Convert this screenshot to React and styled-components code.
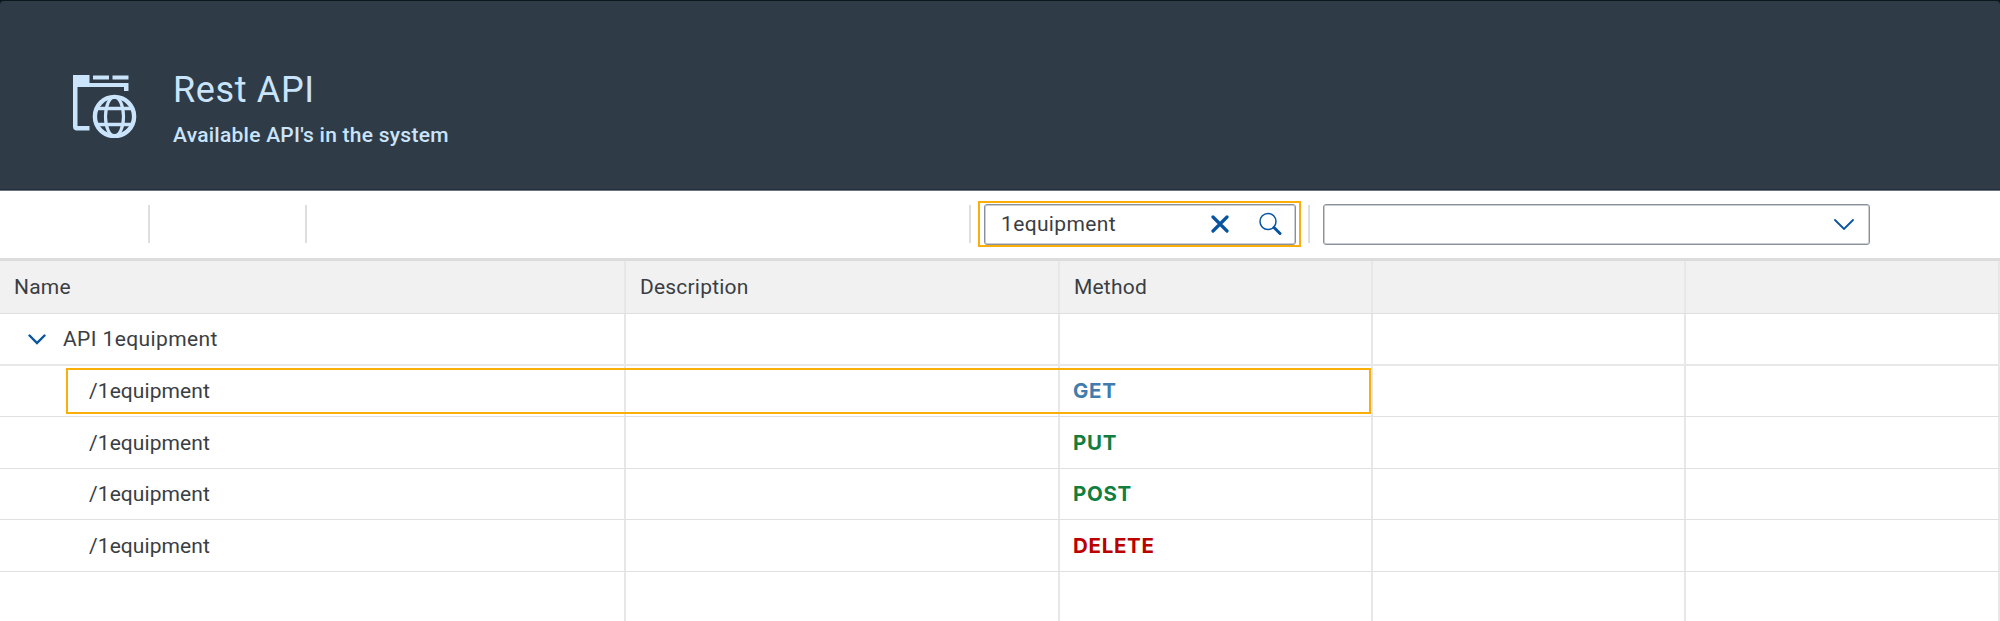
import React from "react";
import styled, { createGlobalStyle } from "styled-components";

const Global = createGlobalStyle`
  * { box-sizing: border-box; }
  body { margin: 0; background: #fff; overflow: hidden; }
`;

const Page = styled.div`
  width: 2000px;
  height: 621px;
  overflow: hidden;
  background: #fff;
  color: #3a3e43;
  font: 400 21px/26px Roboto, "Liberation Sans", sans-serif;
  display: flex;
  flex-direction: column;
`;

const Backdrop = styled.div`
  flex: none;
  background: #0b161d;
  padding-top: 1px;
`;

const Header = styled.header`
  height: 190px;
  padding: 66px 0 0 72px;
  display: flex;
  align-items: flex-start;
  background: #2f3b47;
  border-radius: 4px 4px 0 0;
  border-bottom: 1px solid #6d7680;
  box-shadow: inset 0 -1px 0 #222e39;
  color: #cae4fb;
`;

const HeaderIcon = styled.svg`
  flex: none;
  width: 66px;
  height: 66px;
  margin: 5px 35px 0 0;
`;

const Titles = styled.div`
  display: flex;
  flex-direction: column;
`;

const Title = styled.h1`
  margin: 0;
  font-size: 36px;
  line-height: 46px;
  font-weight: 400;
  letter-spacing: 0.65px;
`;

const Subtitle = styled.p`
  margin: 9px 0 0;
  font-size: 21px;
  line-height: 26px;
  font-weight: 500;
  letter-spacing: 0.25px;
`;

const Toolbar = styled.div`
  flex: none;
  height: 70px;
  display: flex;
  align-items: flex-start;
  padding-top: 10px;
  border-bottom: 3px solid #dcdcdc;
`;

const Separator = styled.span`
  width: 2px;
  height: 38px;
  margin: 4px ${(p) => p.$after}px 0 ${(p) => p.$before}px;
  background: #dedede;
`;

const SearchHighlight = styled.div`
  width: 323px;
  height: 46px;
  padding: 1px 4px;
  border: 2px solid #f9ae08;
`;

const Field = styled.div`
  display: flex;
  align-items: center;
  width: ${(p) => p.$width}px;
  height: 41px;
  border: 1px solid #89919a;
  box-shadow: inset 0 0 0 1px #c9cdd2;
  border-radius: 3px;
  margin-top: ${(p) => p.$top || 0}px;
  padding: 0 ${(p) => p.$right}px 2px 16px;
  svg { flex: none; display: block; }
`;

const FieldText = styled.span`
  flex: 1;
  letter-spacing: 0.35px;
`;

const SearchIcon = styled.svg`
  margin-left: 29px;
`;

const Table = styled.div`
  flex: none;
  display: flex;
  flex-direction: column;
`;

const Row = styled.div`
  position: relative;
  display: grid;
  grid-template-columns: 626px 434px 313px 313px 314px;
  height: ${(p) => p.$height}px;
  background: ${(p) => (p.$head ? "#f1f1f1" : "#fff")};
  border-bottom: ${(p) => p.$line ?? 1}px solid ${(p) => (p.$line === 2 ? "#e8e8e8" : "#e0e0e0")};
`;

const Cell = styled.div`
  display: flex;
  align-items: center;
  padding-left: ${(p) => p.$indent ?? 14}px;
  border-right: 2px solid #e7e7e7;
  letter-spacing: ${(p) => p.$spacing ?? 0.2}px;
  svg { flex: none; margin-right: 17px; }
`;

const Method = styled.strong`
  color: ${(p) => p.$color};
  font-family: Inter, Roboto, sans-serif;
  font-size: 20.5px;
  font-weight: 700;
  letter-spacing: 0.7px;
`;

const RowHighlight = styled.div`
  position: absolute;
  left: 66px;
  top: 2px;
  width: 1305px;
  height: 46px;
  border: 2px solid #f9ae08;
  pointer-events: none;
`;

const SiteIcon = () => (
  <HeaderIcon viewBox="0 0 66 66" fill="none" stroke="currentColor">
    <path fill="currentColor" stroke="none" d="M1 3h16.500v8H56.500v8h-4.500V15H5.500V54H17.500v4.500H5q-4 0-4-4zM21 3.500h16v4H21zM40.500 3.500h16v4h-16z" />
    <circle cx="42.500" cy="44.500" r="19.600" strokeWidth="4.400" />
    <ellipse cx="42.500" cy="44.500" rx="9" ry="19.600" strokeWidth="3.200" />
    <path strokeWidth="3.600" d="M25 36.500h35M25 52.500h35" />
  </HeaderIcon>
);

const METHODS = [
  { name: "GET", color: "#427cac", height: 51, marked: true },
  { name: "PUT", color: "#107e3e", height: 52 },
  { name: "POST", color: "#107e3e", height: 51 },
  { name: "DELETE", color: "#bb0000", height: 52 },
];

export default function App() {
  return (
    <Page>
      <Global />
      <Backdrop>
        <Header>
          <SiteIcon />
          <Titles>
            <Title>Rest API</Title>
            <Subtitle>Available API's in the system</Subtitle>
          </Titles>
        </Header>
      </Backdrop>
      <Toolbar>
        <Separator $before={148} $after={0} />
        <Separator $before={155} $after={0} />
        <Separator $before={662} $after={7} />
        <SearchHighlight>
          <Field $width={312} $right={13}>
            <FieldText>1equipment</FieldText>
            <svg width="18" height="18" viewBox="0 0 18 18" fill="none" stroke="#0854a0" strokeWidth="3.200" strokeLinecap="round">
              <path d="M2 2l14 14M16 2L2 16" />
            </svg>
            <SearchIcon width="24" height="24" viewBox="0 0 24 24" fill="none" stroke="#0854a0">
              <circle cx="10" cy="9.500" r="8" strokeWidth="1.500" />
              <path d="M16 15.500l6 6" strokeWidth="3" strokeLinecap="round" />
            </SearchIcon>
          </Field>
        </SearchHighlight>
        <Separator $before={7} $after={13} />
        <Field $width={547} $right={15} $top={3}>
          <FieldText />
          <svg width="20" height="12" viewBox="0 0 20 12" fill="none" stroke="#0854a0" strokeWidth="1.800" strokeLinecap="round">
            <path d="M1 2l9 9 9-9" />
          </svg>
        </Field>
      </Toolbar>
      <Table>
        <Row $height={53} $head>
          <Cell>Name</Cell>
          <Cell>Description</Cell>
          <Cell>Method</Cell>
          <Cell />
          <Cell />
        </Row>
        <Row $height={52} $line={2}>
          <Cell $indent={28} $spacing={0.4}>
            <svg width="18" height="11" viewBox="0 0 18 11" fill="none" stroke="#0854a0" strokeWidth="2.400" strokeLinecap="round">
              <path d="M1.500 1.500L9 9l7.500-7.500" />
            </svg>
            API 1equipment
          </Cell>
          <Cell /><Cell /><Cell /><Cell />
        </Row>
        {METHODS.map((m) => (
          <Row key={m.name} $height={m.height}>
            <Cell $indent={89} $spacing={0.08}>/1equipment</Cell>
            <Cell />
            <Cell $indent={13}><Method $color={m.color}>{m.name}</Method></Cell>
            <Cell />
            <Cell />
            {m.marked && <RowHighlight />}
          </Row>
        ))}
        <Row $height={60} $line={0}>
          <Cell /><Cell /><Cell /><Cell /><Cell />
        </Row>
      </Table>
    </Page>
  );
}
